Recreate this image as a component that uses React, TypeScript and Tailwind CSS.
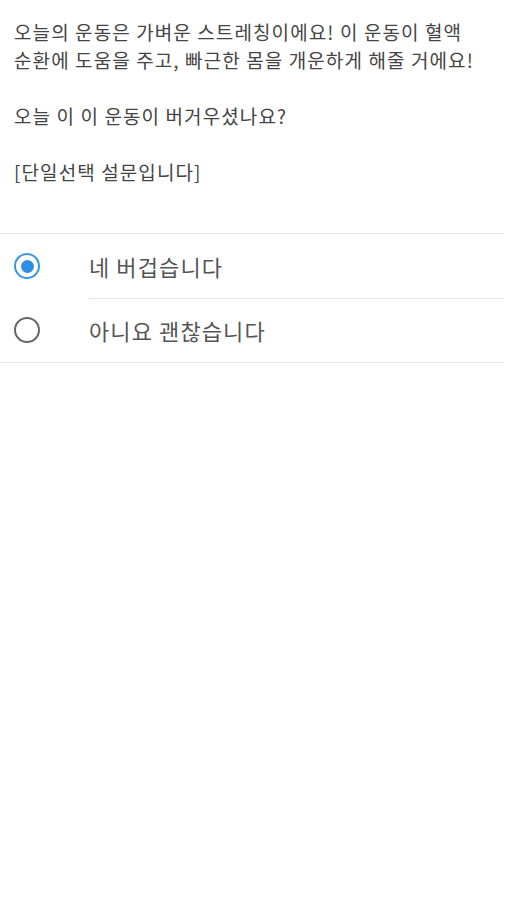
import { useState } from "react";

const options = ["네 버겁습니다", "아니요 괜찮습니다"];

export default function App() {
  const [selected, setSelected] = useState(0);

  return (
    <div
      className="w-[507px] min-h-[900px] bg-white text-[#444]"
      style={{ fontFamily: '"Noto Sans CJK KR", "Noto Sans", sans-serif' }}
    >
      <div className="px-[14px] pt-[18px] text-[19px] leading-[28px] tracking-[1.1px] whitespace-nowrap">
        <p>
          오늘의 운동은 가벼운 스트레칭이에요! 이 운동이 혈액
          <br />
          순환에 도움을 주고, 빠근한 몸을 개운하게 해줄 거에요!
        </p>
        <p className="mt-[28px]">오늘 이 이 운동이 버거우셨나요?</p>
        <p className="mt-[28px]">[단일선택 설문입니다]</p>
      </div>

      <ul className="mt-[47px] mr-[3px] border-t border-b border-[#e4e4e4]">
        {options.map((label, index) => (
          <li
            key={index}
            className="flex h-[64px] items-center cursor-pointer"
            onClick={() => setSelected(index)}
          >
            <div className="w-[89px] pl-[14px] flex items-center">
              <span
                className={`flex h-[26px] w-[26px] items-center justify-center rounded-full border-[2.5px] ${
                  selected === index ? "border-[#3b95e0]" : "border-[#666]"
                }`}
              >
                {selected === index && <span className="h-[13px] w-[13px] rounded-full bg-[#2f8fe0]" />}
              </span>
            </div>
            <div
              className={`flex h-full flex-1 items-center text-[22px] tracking-[1.1px] text-[#555] ${
                index > 0 ? "border-t border-[#e4e4e4]" : ""
              }`}
            >
              {label}
            </div>
          </li>
        ))}
      </ul>
    </div>
  );
}
